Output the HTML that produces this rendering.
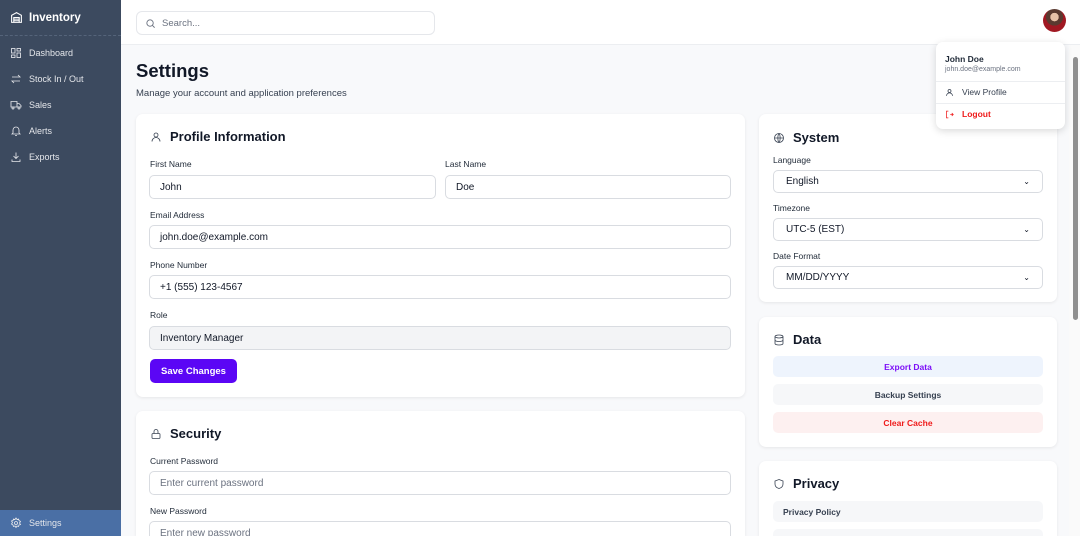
<!DOCTYPE html>
<html style="width:1080px;height:536px;overflow:hidden"><head><meta charset="utf-8"><style>
*{box-sizing:border-box;margin:0;padding:0}
body{width:1080px;height:536px;overflow:hidden;font-family:"Liberation Sans","DejaVu Sans",sans-serif;background:#f8f9fb;position:relative;color:#111827}
.abs{position:absolute}
.side{left:0;top:0;width:121px;height:536px;background:#3c4a5f;color:#fff}
.nav{position:absolute;left:10px;font-size:9px;color:#e5e7eb;display:flex;align-items:center;gap:7px}
.nav svg{width:12px;height:12px;stroke:#e5e7eb;fill:none;stroke-width:1.7}
.top{left:121px;top:0;width:959px;height:45px;background:#fff;border-bottom:1px solid #eceef1}
.card{background:#fff;border-radius:7px;box-shadow:0 1px 3px rgba(0,0,0,.08);overflow:hidden}
.lbl{font-size:8.5px;color:#1f2937;position:absolute}
.inp{position:absolute;height:24px;border:1px solid #d9dce1;border-radius:5px;font-size:10px;padding:0 10px;display:flex;align-items:center;color:#111827;background:#fff}
.h{position:absolute;font-size:13px;font-weight:bold;display:flex;align-items:center;gap:8px}
.h svg{width:12px;height:12px;stroke:#374151;fill:none;stroke-width:1.6}
.sel{position:absolute;left:14px;width:270px;height:23px;border:1px solid #d9dce1;border-radius:5px;font-size:10px;padding:0 12px;display:flex;align-items:center;justify-content:space-between}
.btn{position:absolute;left:14px;width:270px;height:21px;border-radius:5px;font-size:8.5px;font-weight:bold;display:flex;align-items:center;justify-content:center}
</style></head><body>
<div class="abs side">
 <div class="abs" style="left:10px;top:11px;display:flex;align-items:center;gap:6px;font-weight:bold;font-size:11.5px">
  <svg width="13" height="13" viewBox="0 0 24 24" fill="none" stroke="#fff" stroke-width="2"><path d="M3 21V8l9-5 9 5v13H3z"/><path d="M7 21v-9h10v9M7 15h10M7 18h10"/></svg>Inventory</div>
 <div class="abs" style="left:0;top:35px;width:121px;border-top:1px dashed #55647a"></div>
 <div class="nav" style="top:47px"><svg viewBox="0 0 24 24"><rect x="3" y="3" width="7" height="9"/><rect x="14" y="3" width="7" height="5"/><rect x="14" y="12" width="7" height="9"/><rect x="3" y="16" width="7" height="5"/></svg>Dashboard</div>
 <div class="nav" style="top:73px"><svg viewBox="0 0 24 24"><path d="M4 8h16l-4-4M20 16H4l4 4"/></svg>Stock In / Out</div>
 <div class="nav" style="top:99px"><svg viewBox="0 0 24 24"><path d="M2 5h12v11H2zM14 9h4l4 4v3h-8"/><circle cx="6" cy="18" r="2"/><circle cx="18" cy="18" r="2"/></svg>Sales</div>
 <div class="nav" style="top:125px"><svg viewBox="0 0 24 24"><path d="M6 16V10a6 6 0 0 1 12 0v6l2 2H4zM10 21h4"/></svg>Alerts</div>
 <div class="nav" style="top:151px"><svg viewBox="0 0 24 24"><path d="M12 3v12M7 10l5 5 5-5M4 17v4h16v-4"/></svg>Exports</div>
 <div class="abs" style="left:0;top:510px;width:121px;height:26px;background:#4a6fa5"></div>
 <div class="nav" style="top:517px"><svg viewBox="0 0 24 24"><circle cx="12" cy="12" r="3"/><path d="M12 2l2 3 3-1 1 3 3 2-2 3 2 3-3 1-1 3-3-1-2 3-2-3-3 1-1-3-3-2 2-3-2-3 3-1 1-3 3 1z"/></svg>Settings</div>
</div>
<div class="abs top">
 <div class="abs" style="left:15px;top:11px;width:299px;height:24px;border:1px solid #e5e7eb;border-radius:6px;display:flex;align-items:center;padding-left:8px;gap:6px;font-size:9.5px;color:#6b7280">
  <svg width="11" height="11" viewBox="0 0 24 24" fill="none" stroke="#6b7280" stroke-width="2"><circle cx="11" cy="11" r="7"/><path d="M16 16l5 5"/></svg>Search...</div>
 <div class="abs" style="left:922px;top:9px;width:23px;height:23px;border-radius:50%;background:radial-gradient(circle at 50% 35%,#e8c2a8 0 22%,#5a3a30 23% 45%,#a01822 46%);"></div>
</div>
<div class="abs" style="left:136px;top:60px;font-size:18.5px;font-weight:bold">Settings</div>
<div class="abs" style="left:136px;top:88px;font-size:9.5px;color:#374151">Manage your account and application preferences</div>

<div class="abs card" style="left:136px;top:114px;width:609px;height:283px">
 <div class="h" style="left:14px;top:15px"><svg viewBox="0 0 24 24"><circle cx="12" cy="8" r="4"/><path d="M4 21a8 8 0 0 1 16 0"/></svg>Profile Information</div>
 <div class="lbl" style="left:14px;top:45px">First Name</div>
 <div class="inp" style="left:13px;top:61px;width:287px">John</div>
 <div class="lbl" style="left:309px;top:45px">Last Name</div>
 <div class="inp" style="left:309px;top:61px;width:286px">Doe</div>
 <div class="lbl" style="left:14px;top:96px">Email Address</div>
 <div class="inp" style="left:13px;top:111px;width:582px">john.doe@example.com</div>
 <div class="lbl" style="left:14px;top:146px">Phone Number</div>
 <div class="inp" style="left:13px;top:161px;width:582px">+1 (555) 123-4567</div>
 <div class="lbl" style="left:14px;top:196px">Role</div>
 <div class="inp" style="left:13px;top:212px;width:582px;background:#f3f4f6">Inventory Manager</div>
 <div class="abs" style="left:14px;top:245px;width:87px;height:24px;background:#5b06f5;border-radius:5px;color:#fff;font-size:9.5px;font-weight:bold;display:flex;align-items:center;justify-content:center">Save Changes</div>
</div>

<div class="abs card" style="left:136px;top:411px;width:609px;height:125px;border-radius:7px 7px 0 0">
 <div class="h" style="left:14px;top:15px"><svg viewBox="0 0 24 24"><rect x="4" y="11" width="16" height="10" rx="2"/><path d="M8 11V7a4 4 0 0 1 8 0v4"/></svg>Security</div>
 <div class="lbl" style="left:14px;top:45px">Current Password</div>
 <div class="inp" style="left:13px;top:60px;width:582px;color:#6b7280">Enter current password</div>
 <div class="lbl" style="left:14px;top:95px">New Password</div>
 <div class="inp" style="left:13px;top:110px;width:582px;color:#6b7280">Enter new password</div>
</div>

<div class="abs card" style="left:759px;top:114px;width:298px;height:188px">
 <div class="h" style="left:14px;top:16px"><svg viewBox="0 0 24 24"><circle cx="12" cy="12" r="9"/><path d="M3 12h18M12 3c3 3 3 15 0 18M12 3c-3 3-3 15 0 18"/></svg>System</div>
 <div class="lbl" style="left:14px;top:41px">Language</div>
 <div class="sel" style="top:56px"><span>English</span><span style="font-size:8px">⌄</span></div>
 <div class="lbl" style="left:14px;top:89px">Timezone</div>
 <div class="sel" style="top:104px"><span>UTC-5 (EST)</span><span style="font-size:8px">⌄</span></div>
 <div class="lbl" style="left:14px;top:137px">Date Format</div>
 <div class="sel" style="top:152px"><span>MM/DD/YYYY</span><span style="font-size:8px">⌄</span></div>
</div>

<div class="abs card" style="left:759px;top:317px;width:298px;height:130px">
 <div class="h" style="left:14px;top:15px"><svg viewBox="0 0 24 24"><ellipse cx="12" cy="5" rx="8" ry="3"/><path d="M4 5v14c0 1.7 3.6 3 8 3s8-1.3 8-3V5M4 12c0 1.7 3.6 3 8 3s8-1.3 8-3"/></svg>Data</div>
 <div class="btn" style="top:39px;background:#eef4fd;color:#7c0ef7">Export Data</div>
 <div class="btn" style="top:67px;background:#f6f7f9;color:#374151">Backup Settings</div>
 <div class="btn" style="top:95px;background:#fdf0f0;color:#ef1b1b">Clear Cache</div>
</div>

<div class="abs card" style="left:759px;top:461px;width:298px;height:75px;border-radius:7px 7px 0 0">
 <div class="h" style="left:14px;top:15px"><svg viewBox="0 0 24 24"><path d="M12 3l8 3v6c0 5-4 8-8 9-4-1-8-4-8-9V6z"/></svg>Privacy</div>
 <div class="btn" style="top:40px;background:#f6f7f9;color:#374151;justify-content:flex-start;padding-left:10px">Privacy Policy</div>
 <div class="btn" style="top:68px;background:#f6f7f9"></div>
</div>

<div class="abs" style="left:1069px;top:45px;width:11px;height:491px;background:#fafafa"></div>
<div class="abs" style="left:1073px;top:57px;width:5px;height:263px;background:#8f8f8f;border-radius:3px"></div>

<div class="abs card" style="left:936px;top:42px;width:129px;height:87px;box-shadow:0 2px 8px rgba(0,0,0,.15)">
 <div class="abs" style="left:9px;top:12px;font-size:8.5px;font-weight:bold;color:#1f2937">John Doe</div>
 <div class="abs" style="left:9px;top:24px;font-size:7px;color:#6b7280">john.doe@example.com</div>
 <div class="abs" style="left:0;top:39px;width:129px;border-top:1px solid #eceef1"></div>
 <div class="abs" style="left:9px;top:45px;font-size:8.5px;color:#374151;display:flex;align-items:center;gap:8px"><svg width="9" height="9" viewBox="0 0 24 24" fill="none" stroke="#374151" stroke-width="2"><circle cx="12" cy="8" r="4"/><path d="M4 21a8 8 0 0 1 16 0"/></svg>View Profile</div>
 <div class="abs" style="left:0;top:61px;width:129px;border-top:1px solid #eceef1"></div>
 <div class="abs" style="left:9px;top:67px;font-size:8.5px;color:#ef1b1b;font-weight:bold;display:flex;align-items:center;gap:8px"><svg width="9" height="9" viewBox="0 0 24 24" fill="none" stroke="#ef1b1b" stroke-width="2"><path d="M9 3H4v18h5M14 12h8M18 8l4 4-4 4"/></svg>Logout</div>
</div>
</body></html>
